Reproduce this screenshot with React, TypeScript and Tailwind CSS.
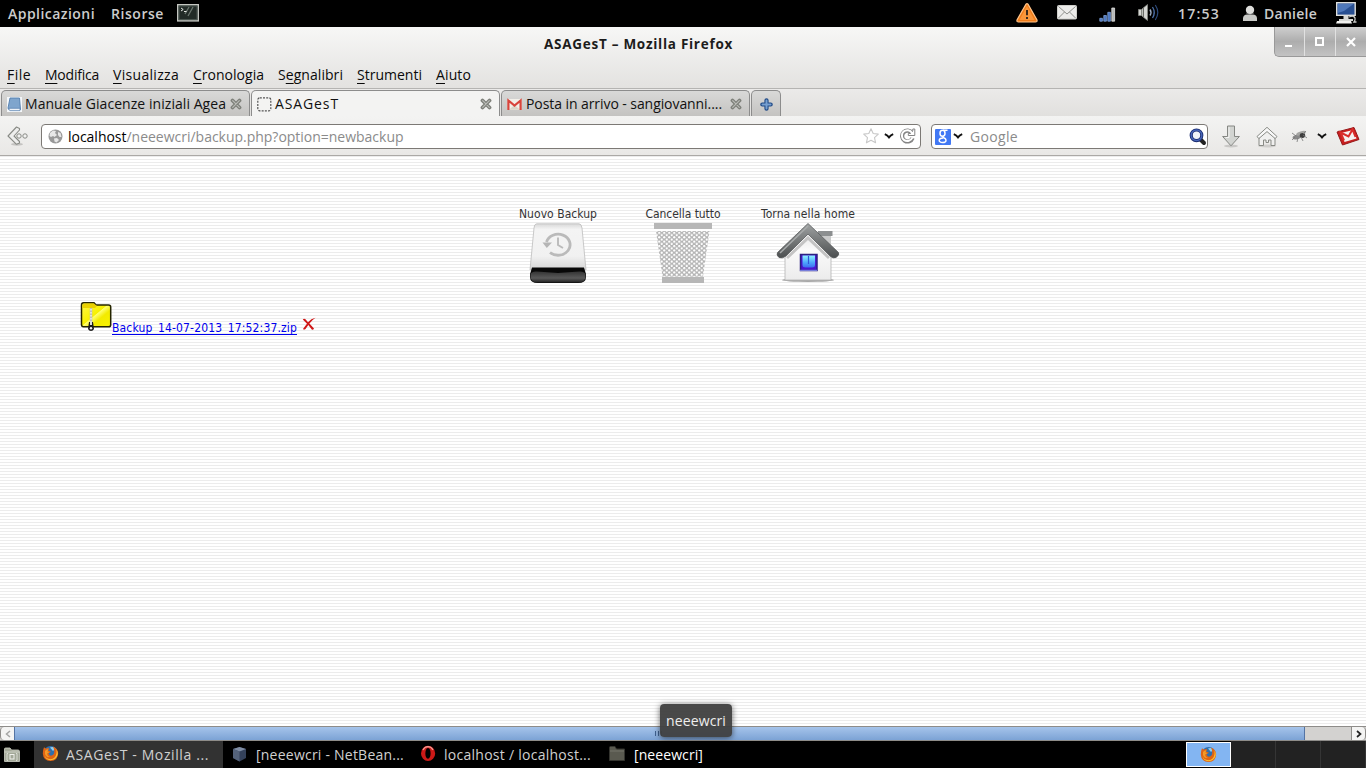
import { useLayoutEffect, useRef, useState } from "react";
import type { ReactNode } from "react";

/* Text set in a box of fixed width; the tracking is adjusted so that it fills the box. */
function Fit({ w, className = "", inner = "", children }: { w: number; className?: string; inner?: string; children: ReactNode }) {
  const ref = useRef<HTMLSpanElement>(null);
  const [spacing, setSpacing] = useState(0);
  useLayoutEffect(() => {
    const el = ref.current;
    if (!el) return;
    const n = (el.textContent ?? "").length;
    setSpacing((w - el.getBoundingClientRect().width) / n);
  }, [w]);
  return (
    <span className={"block shrink-0 whitespace-pre " + className} style={{ width: w }}>
      <span ref={ref} className={"inline-block " + inner} style={{ letterSpacing: spacing }}>
        {children}
      </span>
    </span>
  );
}

function Firefox({ className = "" }: { className?: string }) {
  return (
    <svg className={className} width="17" height="17" viewBox="0 0 17 17">
      <circle cx="8.6" cy="8" r="7" fill="#2f6fae" />
      <path d="M8 2.5Q11 1.2 13.5 3.5L11 6Z" fill="#8fd0f0" />
      <path d="M2 2.2L4 3.8Q5 2.8 7 3L6.2 5.6L9 6.8L6.6 8.2Q7 11 9.5 10.6Q12.6 10 12.2 5.5Q12 3 10.8 1.6Q15.6 3.4 16.2 8Q16 15.8 8.5 16Q1.2 15.4 .8 8.4Q.8 5 2 2.2Z" fill="#e06414" />
      <path d="M2.2 9Q3 13.8 8.5 14.2Q13.5 13.8 14.6 8Q15 4.4 13.4 3.4Q16.4 6 15.6 9.8Q14 15 8.5 15.2Q3 14.8 2.2 9Z" fill="#fbbf32" />
      <path d="M3 6Q4 4.5 6.4 4.2L5.4 6.4L7.6 7L5.2 8.6Q5.2 11.4 8.2 12Q4 12.6 3 9Z" fill="#f39a28" />
    </svg>
  );
}

function Close() {
  return (
    <svg className="shrink-0" width="12" height="12" viewBox="0 0 12 12">
      <path d="M2.5 2.5L9.5 9.5M9.5 2.5L2.5 9.5" stroke="#7e807a" strokeWidth="3.8" strokeLinecap="round" />
      <path d="M2.7 2.7L9.3 9.3M9.3 2.7L2.7 9.3" stroke="#b9bab6" strokeWidth="1.2" strokeLinecap="round" />
    </svg>
  );
}

function Chevron({ className = "" }: { className?: string }) {
  return (
    <svg className={"shrink-0 " + className} width="10" height="7" viewBox="0 0 10 7">
      <path d="M.8 1.2Q3.5 2.3 5 4.4Q6.5 2.3 9.2 1.2" fill="none" stroke="#111" strokeWidth="1.9" />
    </svg>
  );
}

function TopPanel() {
  return (
    <div className="flex h-[27px] shrink-0 items-center bg-black pl-2 text-[14px] font-semibold text-[#cccccc]">
      <Fit w={87}>Applicazioni</Fit>
      <Fit w={53} className="ml-4">Risorse</Fit>
      <svg className="ml-[13px] mb-[2px]" width="22" height="18" viewBox="0 0 22 18">
        <rect x=".7" y=".7" width="20.6" height="16.2" fill="#222b27" stroke="#c4c6c1" strokeWidth="1.4" />
        <rect x="2" y="2" width="18" height="13.5" fill="none" stroke="#55605a" strokeWidth=".8" />
        <path d="M12 3L8 10M16 3L11 12" stroke="#6a756e" strokeWidth="1.3" />
        <path d="M4 4L6.2 5.5L4 7M7 7.5H9.5" stroke="#e4e6e2" strokeWidth="1" fill="none" />
      </svg>
      <svg className="ml-[817px] mb-[2px]" width="22" height="20" viewBox="0 0 22 20">
        <path d="M10 1.2Q11 .2 12 1.2L21 17Q21.4 19 19.5 19H2.5Q.6 19 1 17Z" fill="#f07c1a" stroke="#ffc48a" strokeWidth="1.2" />
        <path d="M11 3L18.5 17H3.5Z" fill="#f9963a" />
        <path d="M11 7V12.3M11 14V16" stroke="#3c2a1b" strokeWidth="2" />
      </svg>
      <svg className="ml-[19px] mb-[3px]" width="20" height="15" viewBox="0 0 20 15">
        <rect x=".5" y=".5" width="19" height="13.5" rx="1" fill="#ececea" stroke="#cfcfcb" />
        <path d="M1.5 1.5L10 9L18.5 1.5M1.5 13L7.5 7M18.5 13L12.5 7" fill="none" stroke="#8f908c" strokeWidth="1" />
      </svg>
      <svg className="ml-[22px] mt-px" width="17" height="15" viewBox="0 0 17 15">
        <path d="M.8 11.3h2.6v2.9H.8zM4.8 8.5h2.6v5.7H4.8zM8.8 5.3h2.6v8.9H8.8z" fill="#4a76c0" stroke="#7e9fd4" strokeWidth=".8" />
        <path d="M12.8 1h2.8v13.2h-2.8z" fill="#b7bab8" stroke="#e1e1e1" strokeWidth=".8" />
      </svg>
      <svg className="ml-[22px] mb-[2px]" width="22" height="19" viewBox="0 0 22 19">
        <path d="M.5 6.5h3v6h-3zM4 6L9.5 1.5V17.5L4 13Z" fill="#d5d6d3" stroke="#8d8f8a" strokeWidth=".7" />
        <path d="M5.5 5V14" stroke="#696b66" />
        <path d="M12 6.5Q14 9.5 12 12.5" fill="none" stroke="#9cabc0" strokeWidth="1.4" />
        <path d="M14.5 4Q18 9.5 14.5 15" fill="none" stroke="#4c6fa6" strokeWidth="1.3" />
        <path d="M17.3 2Q22.3 9.5 17.3 17" fill="none" stroke="#2c4a7a" strokeWidth="1.2" />
      </svg>
      <Fit w={42} className="ml-[18px]">17:53</Fit>
      <svg className="ml-[22px] mb-px" width="16" height="17" viewBox="0 0 16 17">
        <path d="M1 16V13Q1.5 9.5 5 9.5H11Q14.5 9.5 15 13V16Z" fill="#c8c9c6" />
        <circle cx="8" cy="5" r="4.2" fill="#dededc" />
        <path d="M4 8Q8 11 12 8" fill="none" stroke="#888" strokeWidth=".7" />
      </svg>
      <Fit w={53} className="ml-[6px]">Daniele</Fit>
      <svg className="ml-[19px] mb-px" width="21" height="22" viewBox="0 0 21 22">
        <rect x=".7" y=".7" width="18.5" height="12.6" fill="#284f91" stroke="#dedfdc" strokeWidth="1.4" />
        <path d="M2 2H17.5L8 9L2 11Z" fill="#4f78ba" />
        <path d="M7.5 14H12.5V17H17V19H3V17H7.5Z" fill="#d6d7d4" />
        <path d="M1 19H15L16 21.5H0Z" fill="#f0f0ee" />
        <path d="M13 15Q18 13 19 16Q19.5 18 18 20H20.5" fill="none" stroke="#c9cac7" strokeWidth="1.3" />
      </svg>
    </div>
  );
}

function TitleBar() {
  return (
    <div className="flex h-[36px] items-start pl-[544px]">
      <Fit w={189} className="pt-[7px] text-[13.5px] leading-5 font-bold text-[#1c1c1c]">ASAGesT – Mozilla Firefox</Fit>
      <div className="ml-[541px] flex h-[30px] w-[92px] rounded-bl-[5px] border-b border-l border-[#999] bg-linear-to-b from-[#cfcfcf] via-[#adadad] to-[#c3c3c3]">
        <div className="flex w-[30px] items-end justify-center border-r border-[#e1e1e1] pb-[9px]">
          <div className="mr-[2px] h-[2px] w-[7px] bg-white" />
        </div>
        <div className="flex w-[31px] items-center justify-center border-r border-[#e1e1e1] pr-px">
          <div className="h-[9px] w-[9px] border-2 border-white" />
        </div>
        <div className="flex w-[30px] items-center justify-center">
          <svg width="10" height="10" viewBox="0 0 10 10">
            <path d="M1 1L9 9M9 1L1 9" stroke="#fff" strokeWidth="2.2" />
          </svg>
        </div>
      </div>
    </div>
  );
}

const menus = [
  { pre: "", key: "F", post: "ile", w: 24 },
  { pre: "", key: "M", post: "odifica", w: 54 },
  { pre: "", key: "V", post: "isualizza", w: 66 },
  { pre: "", key: "C", post: "ronologia", w: 71 },
  { pre: "S", key: "e", post: "gnalibri", w: 65 },
  { pre: "", key: "S", post: "trumenti", w: 65 },
  { pre: "", key: "A", post: "iuto", w: 35 },
];

function MenuBar() {
  return (
    <div className="flex h-[25px] items-center gap-[14px] pb-[2px] pl-[7px] text-[14px] leading-5 text-[#0a0a0a]">
      {menus.map((m) => (
        <Fit key={m.post} w={m.w}>
          {m.pre}
          <span className="underline underline-offset-3">{m.key}</span>
          {m.post}
        </Fit>
      ))}
    </div>
  );
}

function Tabs() {
  const idle = "flex h-[27px] shrink-0 items-center rounded-t-[5px] border border-b-0 border-[#8c8c8c] bg-linear-to-b from-[#d9d9d8] to-[#c3c2c0] ";
  return (
    <div className="flex h-[28px] shrink-0 items-start border-t border-[#b5b4b2] bg-linear-to-b from-[#ebeae9] to-[#e1e0de] pl-px pt-px text-[14px] text-[#111]">
      <div className={idle + "w-[249px] border-b border-b-[#8c8c8c] pl-[5px]"}>
        <svg width="15" height="15" viewBox="0 0 15 15">
          <rect width="15" height="15" fill="#f4f7fa" />
          <path d="M3 1H12.5L13.5 12.5H2.5Q1 12.5 1 11Z" fill="#7fa5cd" stroke="#507dae" strokeWidth=".9" />
          <path d="M2 11.3H13V13.6H3Q1.5 13 2 11.3Z" fill="#eef2f8" stroke="#507dae" strokeWidth=".7" />
        </svg>
        <Fit w={201} className="ml-[3px] pb-px">Manuale Giacenze iniziali Agea</Fit>
        <div className="ml-[4px]"><Close /></div>
      </div>
      <div className="ml-px flex h-[28px] w-[249px] shrink-0 items-center rounded-t-[5px] border border-b-0 border-[#8c8c8c] bg-[#f3f3f2] pb-px pl-[5px]">
        <svg width="15" height="15" viewBox="0 0 15 15">
          <rect x=".8" y=".8" width="13" height="13" rx="2" fill="none" stroke="#555" strokeWidth="1.2" strokeDasharray="2 1.2" />
        </svg>
        <Fit w={64} className="ml-[3px] pb-px">ASAGesT</Fit>
        <div className="ml-[141px]"><Close /></div>
      </div>
      <div className={idle + "ml-px w-[249px] border-b border-b-[#8c8c8c] pl-[5px]"}>
        <svg width="15" height="15" viewBox="0 0 15 15">
          <rect x=".5" y="2" width="14" height="11" fill="#f2efe9" />
          <path d="M2 12.8L7.5 8L13 12.8Z" fill="#d9d5c8" />
          <path d="M1.4 13V3.5L7.5 8.5L13.6 3.5V13" fill="none" stroke="#d8443c" strokeWidth="2.2" />
        </svg>
        <Fit w={196} className="ml-[4px] pb-px">Posta in arrivo - sangiovanni....</Fit>
        <div className="ml-[8px]"><Close /></div>
      </div>
      <div className={idle + "ml-px w-[30px] justify-center border-b border-b-[#8c8c8c]"}>
        <svg width="13" height="13" viewBox="0 0 13 13">
          <path d="M6.5 2.3V10.7M2.3 6.5H10.7" stroke="#204a87" strokeWidth="4.2" strokeLinecap="round" />
          <path d="M6.5 2.5V10.5M2.5 6.5H10.5" stroke="#769fd0" strokeWidth="2" strokeLinecap="round" />
        </svg>
      </div>
      <div className="mt-[26px] h-px flex-1 bg-[#9a9997]" />
    </div>
  );
}

function NavBar() {
  return (
    <div className="flex h-[40px] shrink-0 items-center border-b border-[#aba9a6] bg-linear-to-b from-[#f3f3f2] to-[#e9e8e6] pt-[2px] pl-[7px] text-[14px]">
      <svg className="mb-px shrink-0" width="22" height="20" viewBox="0 0 22 20">
        <ellipse cx="10" cy="18.3" rx="6" ry="1.4" fill="#c4c3c1" />
        <path d="M9.5 1L12.5 2.5V4L7 10L12.5 15.5V17L9.5 18.3L1 10Z" fill="#eeeeed" stroke="#888a85" strokeWidth="1.1" strokeLinejoin="round" />
        <circle cx="12" cy="10" r="2.2" fill="#f2f2f1" stroke="#888a85" />
        <circle cx="18" cy="10" r="2.2" fill="#f2f2f1" stroke="#888a85" />
      </svg>
      <div className="ml-[12px] flex h-[25px] w-[880px] shrink-0 items-center rounded-[4px] border border-[#7c7975] bg-white pl-[6px]">
        <svg className="mb-px" width="15" height="15" viewBox="0 0 15 15">
          <circle cx="7.5" cy="7.5" r="7" fill="#999" />
          <path d="M2 4L5 1.5L8 2L7 4L9 6L6.5 8L5 7L3 8L1.5 7ZM10 3L12.5 4L13.5 8L11.5 8L10 6ZM6 9.5L9 9L11 11L8.5 13.5L6.5 12.5Z" fill="#e7e7e7" />
        </svg>
        <Fit w={335.5} className="ml-[5px] text-[#8b8b8b]">
          <span className="text-black">localhost</span>/neeewcri/backup.php?option=newbackup
        </Fit>
        <svg className="ml-[459px] mb-px" width="16" height="16" viewBox="0 0 16 16">
          <path d="M8 .8L10.2 5.5L15.3 6.1L11.5 9.7L12.6 14.8L8 12.3L3.4 14.8L4.5 9.7L.7 6.1L5.8 5.5Z" fill="#fff" stroke="#c8c8c8" strokeWidth="1.1" strokeLinejoin="round" />
        </svg>
        <Chevron className="ml-[5px]" />
        <svg className="ml-[6px] mb-[2px]" width="16" height="16" viewBox="0 0 16 16">
          <path d="M12 5A5.4 5.4 0 1 0 12.6 10" fill="none" stroke="#858585" strokeWidth="4.2" />
          <path d="M14.8 1V7.5H8.300V5.5H10.500L12.800 3V1Z" fill="#fff" stroke="#858585" strokeLinejoin="round" />
          <path d="M12 5A5.4 5.4 0 1 0 12.3 9.6" fill="none" stroke="#fff" strokeWidth="2" />
        </svg>
      </div>
      <div className="ml-[10px] flex h-[25px] w-[277px] shrink-0 items-center rounded-[4px] border border-[#7c7975] bg-white pl-[3px]">
        <div className="flex h-4 w-4 items-center justify-center rounded-[1px] bg-[#4178f4] pb-[4px]">
          <svg className="mt-[4px]" width="12" height="15" viewBox="0 0 12 15">
            <ellipse cx="5.500" cy="4.300" rx="2.500" ry="3" fill="none" stroke="#fff" strokeWidth="1.500" />
            <path d="M6 1.300H10.500M6.500 7Q5 8 7 9M6 9C1 9 1 13.500 5.500 13.500C10.500 13.500 9.500 9.500 6.500 8.700" fill="none" stroke="#fff" strokeWidth="1.400" />
          </svg>
        </div>
        <Chevron className="ml-[2px]" />
        <Fit w={48} className="ml-[7px] text-[#8b8b8b]">Google</Fit>
        <svg className="ml-[171px]" width="18" height="18" viewBox="0 0 18 18">
          <path d="M11 11L15 15" stroke="#222" strokeWidth="4" strokeLinecap="round" />
          <circle cx="7.5" cy="7.3" r="5.3" fill="#f0f3f9" stroke="#1b2d70" strokeWidth="3.2" />
          <circle cx="7.5" cy="7.3" r="5.3" fill="none" stroke="#4765b8" strokeWidth="1.4" />
        </svg>
      </div>
      <svg className="ml-[13px] shrink-0" width="20" height="23" viewBox="0 0 20 23">
        <ellipse cx="10" cy="21" rx="7" ry="1.5" fill="#c9c8c6" />
        <path d="M6.5 1H13.5V11.5H18.4L10 20.8L1.6 11.5H6.5Z" fill="#d2d4d1" stroke="#858783" strokeWidth="1" strokeLinejoin="round" />
        <path d="M8 2.2V12.5H4.5" fill="none" stroke="#f4f4f3" />
      </svg>
      <svg className="ml-[15px] shrink-0" width="22" height="22" viewBox="0 0 22 22">
        <ellipse cx="11" cy="20" rx="9" ry="1.4" fill="#cfcecc" />
        <path d="M3 10V19.5H7.500V14H10V16.500H12.500V14H15V19.500H19V10L11 4.500Z" fill="#f0f0ef" stroke="#888a85" strokeLinejoin="round" />
        <path d="M11 1.3L21 10.5L19.2 12.6L11 5.6L2.8 12.6L1 10.5Z" fill="#f8f8f8" stroke="#888a85" strokeLinejoin="round" />
      </svg>
      <svg className="mb-[2px] ml-[13px] shrink-0" width="17" height="14" viewBox="0 0 17 14">
        <ellipse cx="6" cy="8" rx="4.5" ry="2.3" transform="rotate(-15 6 8)" fill="#888" />
        <ellipse cx="10" cy="4.3" rx="5" ry="1.9" transform="rotate(-18 10 4.3)" fill="#a5a5a3" />
        <ellipse cx="11.5" cy="6.5" rx="2.7" ry="2.4" fill="#3e3e3e" />
        <path d="M1 4L5 7M4 8L1 11M7 9L6 13M10 8L12 12M12 6L16 9M12 5L15 2" stroke="#777" strokeWidth=".8" />
      </svg>
      <Chevron className="ml-[9px]" />
      <svg className="mb-px ml-[9px] shrink-0" width="24" height="21" viewBox="0 0 24 21">
        <path d="M1 6L18 1.5L23 13.5L6.5 19Z" fill="#c81f20" stroke="#96191a" strokeLinejoin="round" />
        <path d="M5 7L17 4L20.5 12.5L8.5 16Z" fill="#f5f2f1" />
        <path d="M8 14.5L4.5 6.5L12.5 10.5L16.5 3.5L19.5 11" fill="none" stroke="#d92c2b" strokeWidth="2" />
      </svg>
    </div>
  );
}

function DriveIcon() {
  return (
    <svg width="60" height="62" viewBox="0 0 60 62">
      <defs>
        <linearGradient id="drive" x2="0" y2="1"><stop stopColor="#d8d8d8" /><stop offset=".12" stopColor="#f4f4f4" /><stop offset=".7" stopColor="#f1f1f1" /><stop offset="1" stopColor="#d5d5d5" /></linearGradient>
        <linearGradient id="base" x2="0" y2="1"><stop stopColor="#333" /><stop offset=".6" stopColor="#5a5a5a" /><stop offset="1" stopColor="#222" /></linearGradient>
      </defs>
      <path d="M8 1Q8.500 .8 9 .8H51Q53.500 .8 54 5L58 47H2L6 5Q6.500 1 8 1Z" fill="url(#drive)" stroke="#bdbdbd" strokeWidth=".8" />
      <path d="M4 44.5H56L58 51V54Q58 60 50 60H10Q2 60 2 54V51Z" fill="#080808" />
      <path d="M2.5 51Q4 48 9 48.500L30 50L51 48.500Q56 48 57.5 51V54Q57 59.5 50 59.5H10Q3 59.5 2.5 54Z" fill="url(#base)" />
      <path d="M18.5 19A12 10.5 0 1 1 22 29.5" fill="none" stroke="#bababa" strokeWidth="2.8" />
      <path d="M14.5 19.5H24L18.8 25Z" fill="#b5b5b5" />
      <path d="M30 14.5V22L35 25" fill="none" stroke="#bababa" strokeWidth="1.9" />
    </svg>
  );
}

function BinIcon() {
  return (
    <svg width="60" height="62" viewBox="0 0 60 62">
      <defs>
        <pattern id="mesh" width="5" height="4.4" patternUnits="userSpaceOnUse">
          <rect width="5" height="4.4" fill="#b5b5b5" />
          <circle cx="1.25" cy="1.1" r="1.15" fill="#fff" />
          <circle cx="3.75" cy="3.3" r="1.15" fill="#fff" />
        </pattern>
      </defs>
      <path d="M3 8H56.5L50 53.5H9.5Z" fill="url(#mesh)" />
      <path d="M1 0H59V6H1ZM9 54H51V60H9Z" fill="#b7b7b7" />
    </svg>
  );
}

function HouseIcon() {
  return (
    <svg width="64" height="62" viewBox="0 0 64 62">
      <defs>
        <linearGradient id="roof" x2="0" y2="1"><stop stopColor="#a0a3a3" /><stop offset="1" stopColor="#4b4e4f" /></linearGradient>
        <linearGradient id="wall" x2="0" y2="1"><stop stopColor="#e4e4e4" /><stop offset=".4" stopColor="#fafafa" /><stop offset="1" stopColor="#ececec" /></linearGradient>
        <linearGradient id="pane" x2="0" y2="1"><stop stopColor="#8df3ff" /><stop offset=".6" stopColor="#4ba4fb" /><stop offset="1" stopColor="#3f6cf0" /></linearGradient>
      </defs>
      <ellipse cx="32" cy="57" rx="26" ry="2" fill="#a8a8a8" />
      <path d="M46 8.5H55V25L46 18Z" fill="#c9caca" />
      <path d="M42 8H56.5V13H42Z" fill="#8c8f90" />
      <path d="M9 27L32 7L55 27V57H9Z" fill="url(#wall)" stroke="#b4b4b4" strokeWidth=".8" />
      <path d="M10 34L32 13L54 34L52 36L32 17L12 36Z" fill="#c4c4c4" />
      <path d="M32 .5L62.5 29.5Q64 32 60 34.5Q57 36 54 33L32 11L10 33Q6 36 3 34.5Q0 32 1.5 29.5Z" fill="url(#roof)" stroke="#595c5d" strokeWidth=".8" />
      <path d="M32 3L4 30" stroke="#a8abab" strokeWidth="1.5" />
      <rect x="24.500" y="31.5" width="16.500" height="16" fill="#4a16d0" stroke="#2b1f80" strokeWidth="1.5" />
      <path d="M26.5 32.5H39V42Q39 44.500 36 44.500H29.5Q26.5 44.500 26.5 42Z" fill="url(#pane)" />
      <path d="M32.5 33V41" stroke="#2f57d8" strokeWidth="1.2" />
      <path d="M24 47.300H41" stroke="#8b96f2" strokeWidth="1" />
    </svg>
  );
}

function Page() {
  return (
    <main className="h-[570px] shrink-0 bg-[repeating-linear-gradient(to_bottom,#ececec_0px,#ececec_1px,#ffffff_1px,#ffffff_3px)] pt-[50px] font-['DejaVu_Sans_Condensed','DejaVu_Sans',sans-serif] text-[12px] leading-4 text-[#333]">
      <div className="flex pl-[518px]">
        <div className="flex w-[79px] flex-col items-center">
          <Fit w={78} className="mb-px ml-px">Nuovo Backup</Fit>
          <DriveIcon />
        </div>
        <div className="ml-[48px] flex w-[75px] flex-col items-center">
          <Fit w={75} className="mb-px ml-px">Cancella tutto</Fit>
          <BinIcon />
        </div>
        <div className="ml-[41px] flex w-[94px] flex-col items-center">
          <Fit w={94} className="mb-px">Torna nella home</Fit>
          <HouseIcon />
        </div>
      </div>
      <div className="flex items-end pt-[16px] pl-[80px]">
        <svg className="mb-[2px]" width="32" height="32" viewBox="0 0 32 32">
          <defs>
            <linearGradient id="folder" x2="1" y2="1"><stop stopColor="#fff84b" /><stop offset=".48" stopColor="#f7f000" /><stop offset=".5" stopColor="#ffff70" /><stop offset=".65" stopColor="#f3eb00" /><stop offset="1" stopColor="#f8f300" /></linearGradient>
          </defs>
          <path d="M1.5 4Q1.5 1.7 3.5 1.7H14L16 4H28.5Q30.7 4 30.7 6V24Q30.7 25.8 28.5 25.8H3.5Q1.5 25.8 1.5 23.5Z" fill="url(#folder)" stroke="#252500" strokeWidth="1.5" />
          <path d="M2.3 4V7H15L17 5L14 2.5H4Z" fill="#e9d000" />
          <path d="M11 7V22" stroke="#c1c1b5" strokeWidth="2.5" />
          <path d="M11 8V22" stroke="#fff" strokeWidth="1" strokeDasharray="1.5 1.5" />
          <path d="M9 21H13L14 28Q13 30 11 30Q9 30 8 28Z" fill="#1b1b1b" />
          <path d="M10 20H12V24H10Z" fill="#ddd" />
          <circle cx="11" cy="27.3" r="1.2" fill="#eee" />
        </svg>
        <Fit w={185} className="-mb-px text-[#0000ee]" inner="underline underline-offset-2">Backup_14-07-2013_17:52:37.zip</Fit>
        <svg className="mb-[4px] ml-[5px]" width="14" height="14" viewBox="0 0 14 14">
          <path d="M.8 2.5Q2 1 3.5 2.2L6 5.2Q9 1.5 13.5 .7Q10 3 7.4 6.5L12 11.5Q11.5 12.8 10 12.7L6.3 8L3.500 12Q2 13 1 12Q3 9 5 6.7Z" fill="#cf1717" />
        </svg>
      </div>
    </main>
  );
}

function ScrollBar() {
  return (
    <div className="flex h-[15px] shrink-0 border-y border-[#8e8c89] bg-[#d3d2d0]">
      <div className="flex w-[14px] shrink-0 items-center justify-center rounded-l-[4px] border-l border-[#8e8c89] bg-[#f4f4f3]">
        <svg width="6" height="8" viewBox="0 0 6 8"><path d="M5 1L1.5 4L5 7" fill="none" stroke="#a6a6a5" strokeWidth="1.5" /></svg>
      </div>
      <div className="flex w-[1291px] shrink-0 items-center justify-center gap-[2px] border-x border-[#5474a4] bg-linear-to-b from-[#a6c4eb] to-[#7ca3d5] pr-[2px]">
        <div className="h-[5px] w-px bg-[#3f6190]" />
        <div className="h-[5px] w-px bg-[#3f6190]" />
        <div className="h-[5px] w-px bg-[#3f6190]" />
      </div>
      <div className="flex-1" />
      <div className="flex w-[15px] shrink-0 items-center justify-center rounded-r-[4px] border-x border-[#8e8c89] bg-[#f4f4f3]">
        <svg width="6" height="8" viewBox="0 0 6 8"><path d="M1 1L4.5 4L1 7" fill="none" stroke="#222" strokeWidth="1.7" /></svg>
      </div>
    </div>
  );
}

function Taskbar() {
  return (
    <div className="flex h-[27px] shrink-0 items-center bg-black text-[14px] text-[#d0d0d0]">
      <svg className="ml-1 shrink-0" width="16" height="16" viewBox="0 0 16 16">
        <path d="M.5 2Q.5 1 1.5 1H6L7.5 3H14Q15.5 3 15.5 4.5V14.5H.5Z" fill="#a3a898" stroke="#d0d3c8" strokeWidth=".8" />
        <path d="M.5 5H15.5" stroke="#d0d3c8" />
        <rect x="6" y="7.5" width="4" height="4.5" fill="none" stroke="#f0f1ec" />
        <path d="M4 6.5H3V13.5H4M12 6.5H13V13.5H12" fill="none" stroke="#e0e2da" strokeWidth=".9" />
      </svg>
      <div className="ml-[14px] flex h-[27px] w-[189px] shrink-0 items-center bg-[#323232] pl-[8px]">
        <Firefox className="mb-[2px]" />
        <Fit w={143} className="ml-[7px]">ASAGesT - Mozilla ...</Fit>
      </div>
      <svg className="mb-[2px] ml-[9px] shrink-0" width="15" height="16" viewBox="0 0 15 16">
        <path d="M1 3L7.5 1L14 3V12L7.5 15.5L1 12Z" fill="#34415a" />
        <path d="M1 3L7.5 1L14 3L7.5 5.5Z" fill="#7f8da4" />
        <path d="M1 3L7.5 5.5V15.5L1 12Z" fill="#54627a" />
      </svg>
      <Fit w={148} className="ml-[9px]">[neeewcri - NetBean...</Fit>
      <svg className="mb-[3px] ml-[16px] shrink-0" width="16" height="17" viewBox="0 0 16 17">
        <path fillRule="evenodd" d="M8 .8A7 7.4 0 0 1 8 16A7 7.6 0 0 1 8 .8ZM8 3C4.5 3 4.5 13.8 8 13.8C11.5 13.8 11.5 3 8 3Z" fill="#cc1917" />
        <path d="M3 5Q4.5 1.8 8 1.6Q11.5 1.8 13 5" fill="none" stroke="#f39a91" strokeWidth="1.3" />
      </svg>
      <Fit w={147} className="ml-[8px]">localhost / localhost...</Fit>
      <svg className="mb-[3px] ml-[18px] shrink-0" width="16" height="15" viewBox="0 0 16 15">
        <path d="M.5 1.5Q.5 .5 1.5 .5H6L7.5 3H15.5V14.5H.5Z" fill="#5a5a50" stroke="#34342f" />
        <path d="M1 5H15" stroke="#74746a" />
      </svg>
      <Fit w={69} className="ml-[9px] text-white">[neeewcri]</Fit>
      <div className="ml-auto flex h-[27px] shrink-0 items-center">
        <div className="flex h-[25px] w-[45px] items-center justify-center border border-white bg-[#83b5f2]">
          <Firefox className="mb-px" />
        </div>
        <div className="h-[27px] w-[45px] border-r border-[#353535] bg-[#222]" />
        <div className="h-[27px] w-[45px] border-r border-[#353535] bg-[#222]" />
        <div className="h-[27px] w-[45px] border-r border-[#353535] bg-[#222]" />
      </div>
    </div>
  );
}

export default function App() {
  return (
    <div className="relative flex h-[768px] w-[1366px] flex-col overflow-hidden bg-white font-['Open_Sans','Noto_Sans',sans-serif]">
      <TopPanel />
      <header className="flex h-[129px] shrink-0 flex-col">
        <div className="h-[61px] shrink-0 bg-linear-to-b from-[#f7f7f6] to-[#e3e2e0]">
          <TitleBar />
          <MenuBar />
        </div>
        <Tabs />
        <NavBar />
      </header>
      <Page />
      <ScrollBar />
      <Taskbar />
      <div className="absolute top-[704px] left-[660px] flex h-[33px] w-[72px] items-center justify-center rounded-[4px] bg-[#3f3f3f]/95 text-[14px] text-[#eee] shadow-[0_1px_6px_rgba(0,0,0,0.6)]">
        <Fit w={60}>neeewcri</Fit>
      </div>
    </div>
  );
}
